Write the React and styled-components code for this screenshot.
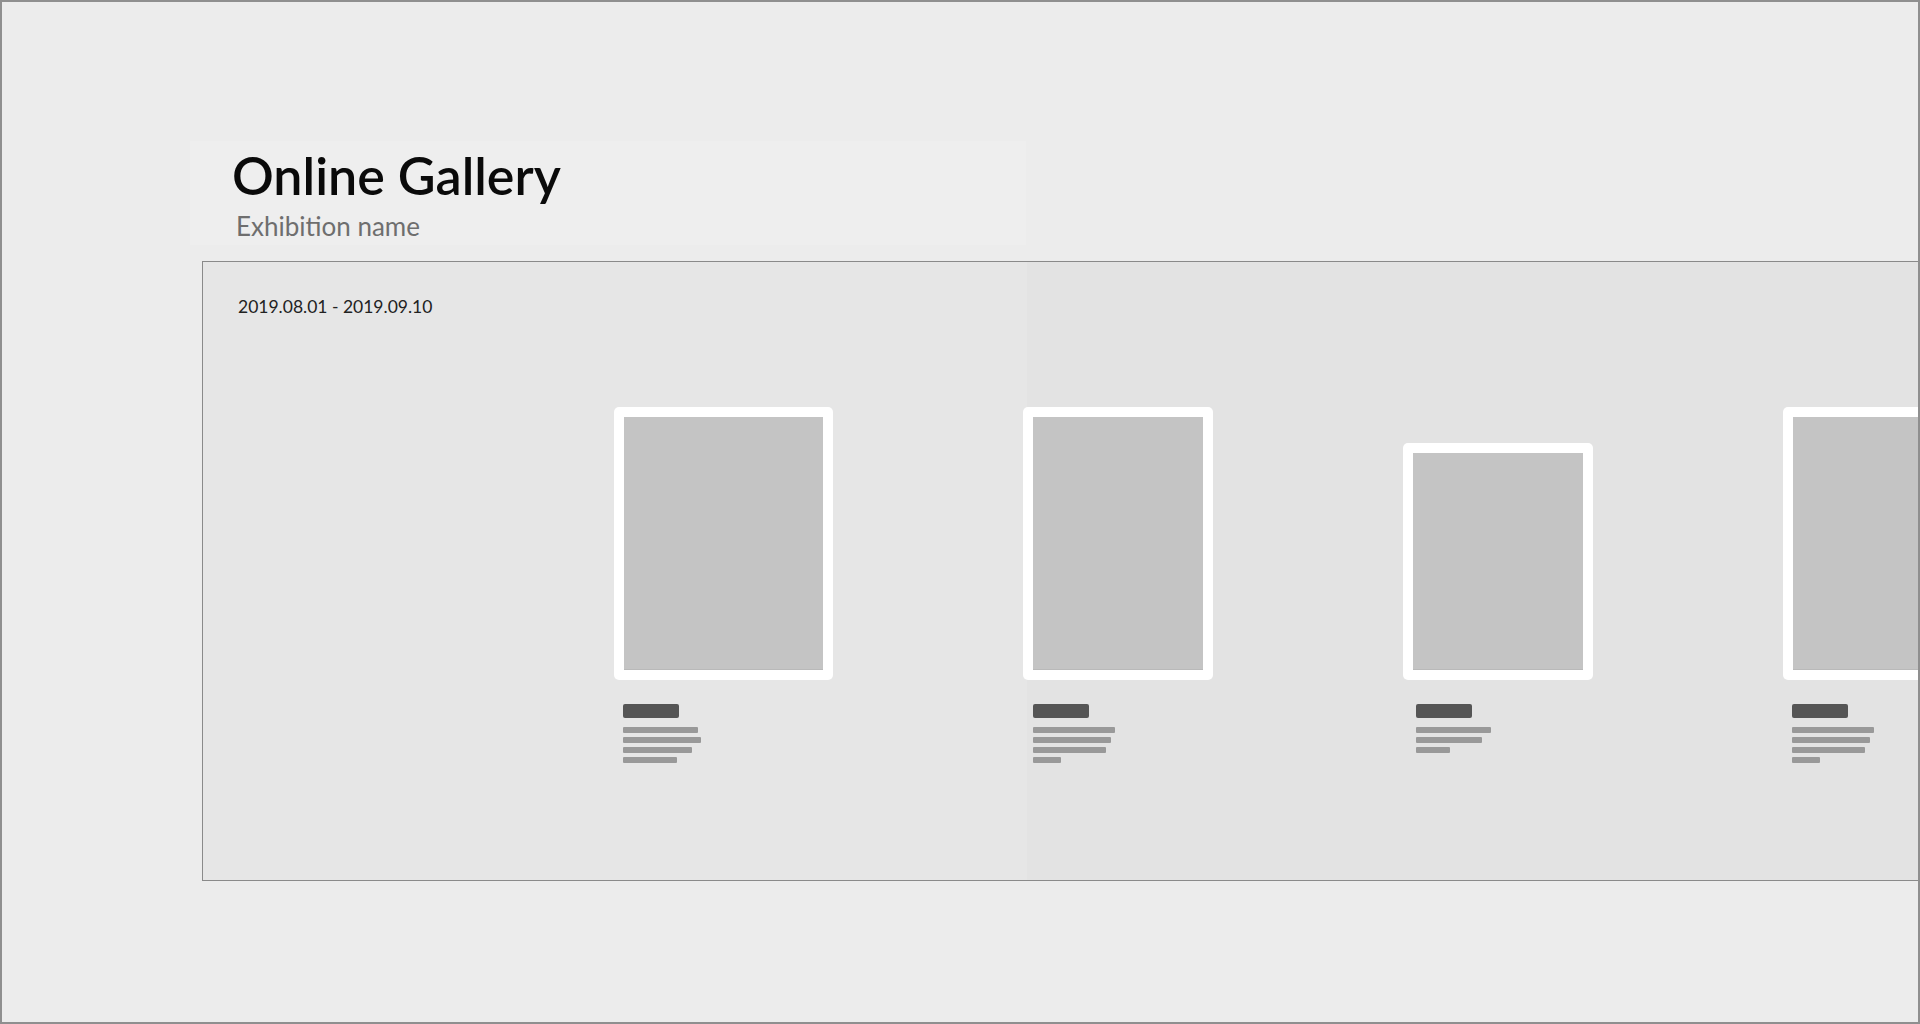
import React from "react";
import styled, { createGlobalStyle } from "styled-components";

const GlobalStyle = createGlobalStyle`
  html, body {
    margin: 0;
    padding: 0;
    background: #ececec;
  }
  body {
    font-family: Lato, "Open Sans", "Liberation Sans", sans-serif;
  }
`;

const Screen = styled.main`
  box-sizing: border-box;
  height: 100vh;
  border: 2px solid #8f8f8f;
  background: #ececec;
  overflow: hidden;
  padding: 139px 0 0 188px;
`;

const Header = styled.header`
  width: 836px;
  box-sizing: border-box;
  padding: 8px 0 6px 42px;
  background: #eeeeee;
`;

const Title = styled.h1`
  margin: 0;
  font-size: 52px;
  line-height: 52px;
  font-weight: 600;
  letter-spacing: 0;
  color: #0a0a0a;
`;

const Subtitle = styled.p`
  margin: 12px 0 0 4px;
  font-size: 26px;
  line-height: 26px;
  font-weight: 400;
  color: #6e6e6e;
`;

const Exhibition = styled.section`
  box-sizing: border-box;
  margin: 16px -300px 0 12px;
  height: 620px;
  border: 1px solid #8a8a8a;
  background: linear-gradient(to right, #e6e6e6 0, #e6e6e6 824px, #e3e3e3 824px);
  padding: 36px 0 0 35px;
`;

const Period = styled.p`
  margin: 0;
  font-size: 17.5px;
  line-height: 17.5px;
  color: #222222;
`;

const Wall = styled.div`
  display: flex;
  align-items: flex-start;
  gap: 190px;
  margin-top: 91px;
  padding-left: 376px;
`;

const Piece = styled.article`
  display: flex;
  flex-direction: column;
  flex: none;
  width: ${(p) => p.$width}px;
`;

const Hanger = styled.div`
  height: 273px;
  display: flex;
  align-items: flex-end;
`;

const Frame = styled.div`
  box-sizing: border-box;
  width: 100%;
  height: ${(p) => p.$height}px;
  padding: 10px;
  background: #ffffff;
  border-radius: 5px;
`;

const Canvas = styled.div`
  width: 100%;
  height: 100%;
  background: #c4c4c4;
  box-shadow: inset 0 -1px 0 #b9b9b9;
`;

const Caption = styled.div`
  display: flex;
  flex-direction: column;
  align-items: flex-start;
  gap: 4px;
  margin-top: 24px;
  padding-left: ${(p) => p.$inset}px;
`;

const Label = styled.span`
  width: 56px;
  height: 14px;
  margin-bottom: 5px;
  border-radius: 2px;
  background: #555555;
`;

const Line = styled.span`
  height: 6px;
  border-radius: 1px;
  background: #999999;
`;

const pieces = [
  { width: 219, height: 273, inset: 9, lines: [75, 78, 69, 54] },
  { width: 190, height: 273, inset: 10, lines: [82, 78, 73, 28] },
  { width: 190, height: 237, inset: 13, lines: [75, 66, 34] },
  { width: 190, height: 273, inset: 9, lines: [82, 78, 73, 28] },
];

export default function App() {
  return (
    <>
      <GlobalStyle />
      <Screen>
        <Header>
          <Title>Online Gallery</Title>
          <Subtitle>Exhibition name</Subtitle>
        </Header>

        <Exhibition>
          <Period>2019.08.01 - 2019.09.10</Period>

          <Wall>
            {pieces.map((p, i) => (
              <Piece key={i} $width={p.width}>
                <Hanger>
                  <Frame $height={p.height}>
                    <Canvas />
                  </Frame>
                </Hanger>
                <Caption $inset={p.inset}>
                  <Label />
                  {p.lines.map((w, j) => (
                    <Line key={j} style={{ width: w }} />
                  ))}
                </Caption>
              </Piece>
            ))}
          </Wall>
        </Exhibition>
      </Screen>
    </>
  );
}
